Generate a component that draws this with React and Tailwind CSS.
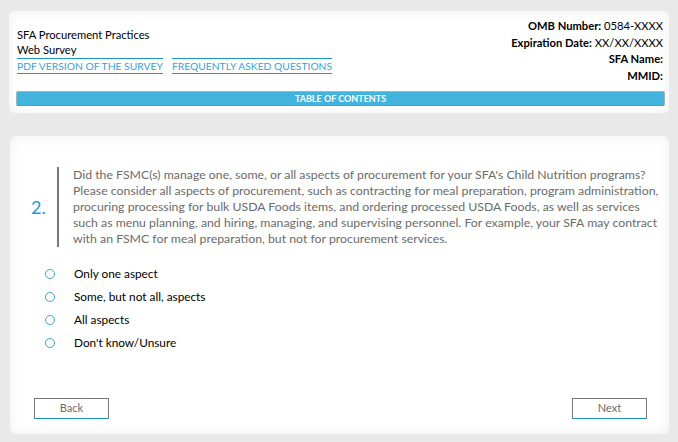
import React from 'react';

const options = ['Only one aspect', 'Some, but not all, aspects', 'All aspects', "Don't know/Unsure"];

const questionLines = [
    "Did the FSMC(s) manage one, some, or all aspects of procurement for your SFA's Child Nutrition programs?",
    'Please consider all aspects of procurement, such as contracting for meal preparation, program administration,',
    'procuring processing for bulk USDA Foods items, and ordering processed USDA Foods, as well as services',
    'such as menu planning, and hiring, managing, and supervising personnel. For example, your SFA may contract',
    'with an FSMC for meal preparation, but not for procurement services.',
];

const MetaRow = ({ label, value }) => (
    <div className="leading-[16.5px]">
        <span className="font-bold">{label}</span>
        {value && <span> {value}</span>}
    </div>
);

const App = () => {
    return (
        <div className="min-h-[442px] bg-[#e9e9e9] px-[9px] pt-[11px] pb-[9px] text-[12px] text-black" style={{ fontFamily: 'Lato, "Open Sans", sans-serif' }}>
            {/* Survey header */}
            <div className="rounded-[6px] bg-white shadow-[inset_0_0_14px_rgba(0,0,0,0.06)] pl-[7px] pr-[4px] pt-[7px] pb-[7px]">
                <div className="flex items-start justify-between pl-[1px] pr-[2px]">
                    <div className="pt-[9px] text-[11.2px]">
                        <div className="leading-[15px]">SFA Procurement Practices</div>
                        <div className="leading-[16px]">Web Survey</div>
                        <div className="flex gap-[9px]">
                            <a className="border-y border-[#1b97d4] text-[10.3px] leading-[14px] text-[#3b9fd6] uppercase">PDF Version of the Survey</a>
                            <a className="border-y border-[#1b97d4] text-[10.3px] leading-[14px] text-[#3b9fd6] uppercase">Frequently Asked Questions</a>
                        </div>
                    </div>
                    <div className="text-right text-[11.2px]">
                        <MetaRow label="OMB Number:" value="0584-XXXX" />
                        <MetaRow label="Expiration Date:" value="XX/XX/XXXX" />
                        <MetaRow label="SFA Name:" />
                        <MetaRow label="MMID:" />
                    </div>
                </div>
                <div className="mt-[7px] h-[15px] rounded-[2px] border border-[#9fb5c0] border-b-[#3aa6d0] bg-[#42b3dc] text-center text-[9px] font-bold leading-[13px] text-white uppercase">
                    Table of Contents
                </div>
            </div>

            {/* Question card */}
            <div className="mt-[23px] ml-[1px] h-[298px] rounded-[6px] bg-white shadow-[inset_0_0_14px_rgba(0,0,0,0.06)] flex flex-col">
                <div className="flex items-center pt-[31px] pl-[21px]">
                    <div className="w-[26px] text-[18px] leading-[20px] text-[#1a9bd7]">2.</div>
                    <div className="border-l-2 border-[#777] pl-[14px] text-[12.3px] leading-[16px] text-[#6b6b6b]">
                        {questionLines.map((line, i) => (
                            <div key={i} className="whitespace-nowrap">{line}</div>
                        ))}
                    </div>
                </div>

                <div className="mt-[15px] pl-[35px] flex flex-col text-[11.8px]">
                    {options.map(opt => (
                        <label key={opt} className="flex items-center h-[23px]">
                            <span className="w-[10px] h-[10px] rounded-full border-[1.5px] border-[#3aa3d3] mr-[19px]"></span>
                            <span className="leading-[16px]">{opt}</span>
                        </label>
                    ))}
                </div>

                <div className="mt-auto mb-[15px] flex justify-between pl-[24px] pr-[22px]">
                    <button className="w-[75px] h-[21px] border border-[#777] border-b-[#1b8fc6] text-[11px] text-[#6b6b6b] bg-white">Back</button>
                    <button className="w-[75px] h-[21px] border border-[#777] border-b-[#1b8fc6] text-[11px] text-[#6b6b6b] bg-white">Next</button>
                </div>
            </div>
        </div>
    );
};

export default App;
